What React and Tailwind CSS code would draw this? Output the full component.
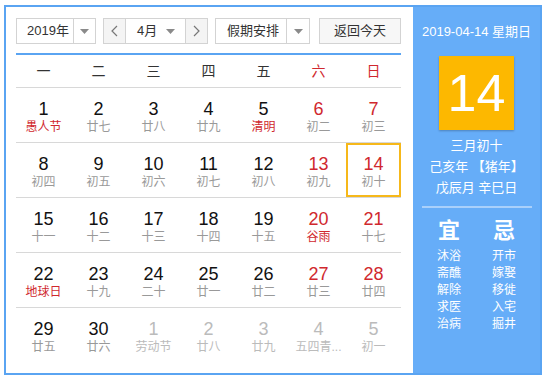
import React from "react";

const F = { fontFamily: '"Liberation Sans", Arial, "Noto Sans CJK SC", sans-serif' };

const weeks = [
  [["1","愚人节","hr"],["2","廿七"],["3","廿八"],["4","廿九"],["5","清明","hr"],["6","初二","w"],["7","初三","w"]],
  [["8","初四"],["9","初五"],["10","初六"],["11","初七"],["12","初八"],["13","初九","w"],["14","初十","sel"]],
  [["15","十一"],["16","十二"],["17","十三"],["18","十四"],["19","十五"],["20","谷雨","wr"],["21","十七","w"]],
  [["22","地球日","hr"],["23","十九"],["24","二十"],["25","廿一"],["26","廿二"],["27","廿三","w"],["28","廿四","w"]],
  [["29","廿五"],["30","廿六"],["1","劳动节","o"],["2","廿八","o"],["3","廿九","o"],["4","五四青...","o"],["5","初一","o"]],
];

function Caret() {
  return (
    <svg width="9" height="5" viewBox="0 0 9 5"><path d="M0 0h9L4.5 5z" fill="#8a8a8a" /></svg>
  );
}

function Cell({ d }) {
  const [n, l, t] = d;
  let nc = "text-[#111]";
  let lc = "text-[#999]";
  if (t === "hr") lc = "text-[#d0282e]";
  if (t === "w" || t === "sel") nc = "text-[#d0282e]";
  if (t === "wr") { nc = "text-[#d0282e]"; lc = "text-[#d0282e]"; }
  if (t === "o") { nc = "text-[#bbb]"; lc = "text-[#bbb]"; }
  return (
    <div className={"flex flex-col items-center pt-[12px] h-[54px] " + (t === "sel" ? "outline-2 -outline-offset-2 outline-[#f6b81a] outline" : "")}>
      <div className={"text-[18px] leading-[18px] " + nc}>{n}</div>
      <div className={"text-[12px] leading-[18px] " + lc}>{l}</div>
    </div>
  );
}

export default function App() {
  return (
    <div style={F} className="w-[547px] h-[381px] bg-white pt-[5px] pl-[4px]">
      <div className="w-[538px] h-[370px] border-2 border-[#5aa4f2] flex">
        <div className="w-[407px] pl-[10px] pr-[12px] pt-[11px]">
          <div className="flex items-center h-[26px] text-[13px] text-[#333]">
            <div className="w-[80px] h-[26px] border border-[#d3d3d3] flex items-center">
              <div className="w-[56px] pl-[10px]">2019年</div>
              <div className="flex-1 h-full border-l border-[#d3d3d3] flex items-center justify-center"><Caret /></div>
            </div>
            <div className="ml-[7px] w-[105px] h-[26px] border border-[#d3d3d3] flex items-center">
              <div className="w-[22px] h-full bg-[#f4f4f4] border-r border-[#d3d3d3] flex items-center justify-center">
                <svg width="7" height="12" viewBox="0 0 7 12"><path d="M6 1L1 6l5 5" fill="none" stroke="#777" strokeWidth="1.2" /></svg>
              </div>
              <div className="flex-1 flex items-center pl-[11px] pr-[10px] justify-between">
                <span>4月</span><Caret />
              </div>
              <div className="w-[22px] h-full bg-[#f4f4f4] border-l border-[#d3d3d3] flex items-center justify-center">
                <svg width="7" height="12" viewBox="0 0 7 12"><path d="M1 1l5 5-5 5" fill="none" stroke="#777" strokeWidth="1.2" /></svg>
              </div>
            </div>
            <div className="ml-[7px] w-[95px] h-[26px] border border-[#d3d3d3] flex items-center">
              <div className="w-[70px] pl-[11px]">假期安排</div>
              <div className="flex-1 h-full border-l border-[#d3d3d3] flex items-center justify-center"><Caret /></div>
            </div>
            <div className="ml-[9px] w-[82px] h-[26px] border border-[#d3d3d3] bg-[#f7f7f7] flex items-center justify-center">返回今天</div>
          </div>
          <div className="mt-[9px] h-[2px] bg-[#5aa4f2]" />
          <div className="grid grid-cols-7 h-[33px] items-center text-[14px] border-b border-[#d8d8d8]">
            {["一","二","三","四","五"].map((w) => (
              <div key={w} className="text-center text-[#333]">{w}</div>
            ))}
            <div className="text-center text-[#d0282e]">六</div>
            <div className="text-center text-[#d0282e]">日</div>
          </div>
          {weeks.map((row, i) => (
            <div key={i} className={"grid grid-cols-7 " + (i < 4 ? "border-b border-[#d8d8d8]" : "")}>
              {row.map((d, j) => <Cell key={j} d={d} />)}
            </div>
          ))}
        </div>
        <div className="flex-1 bg-[#66adf8] flex flex-col items-center text-white">
          <div className="mt-[16px] text-[13px] leading-[18px]">2019-04-14 星期日</div>
          <div className="mt-[15px] w-[75px] h-[74px] bg-[#fdb800] flex items-center justify-center text-[52px] leading-none shadow-[0_1px_2px_rgba(0,0,0,0.25)]">14</div>
          <div className="mt-[5px] text-[13px] leading-[21px] text-center">
            <div>三月初十</div>
            <div>己亥年 【猪年】</div>
            <div>戊辰月 辛巳日</div>
          </div>
          <div className="mt-[8px] w-[110px] h-[2px] bg-[#a9d0fb]" />
          <div className="w-[110px] grid grid-cols-2 mt-[10px]">
            <div className="flex flex-col items-center">
              <div className="text-[22px] leading-[26px] font-bold">宜</div>
              <div className="mt-[4px] text-[12px] leading-[17px] text-center">
                <div>沐浴</div><div>斋醮</div><div>解除</div><div>求医</div><div>治病</div>
              </div>
            </div>
            <div className="flex flex-col items-center">
              <div className="text-[22px] leading-[26px] font-bold">忌</div>
              <div className="mt-[4px] text-[12px] leading-[17px] text-center">
                <div>开市</div><div>嫁娶</div><div>移徙</div><div>入宅</div><div>掘井</div>
              </div>
            </div>
          </div>
        </div>
      </div>
    </div>
  );
}
